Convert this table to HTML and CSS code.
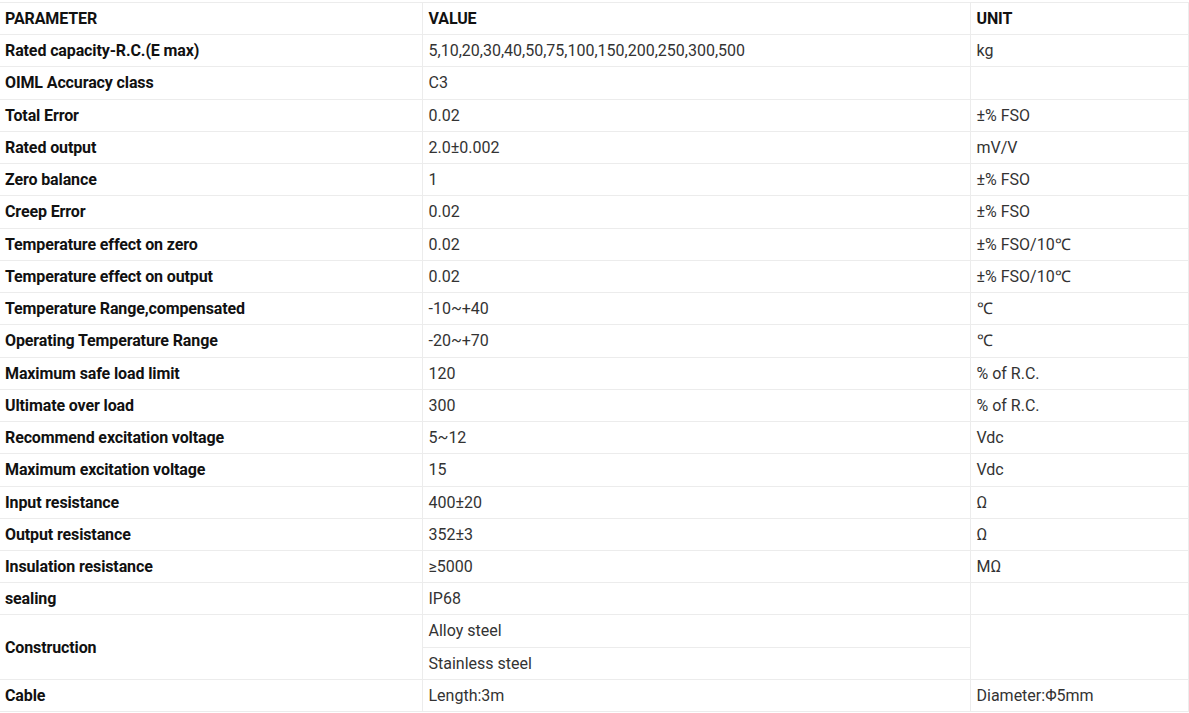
FILE: index.html
```html
<!DOCTYPE html>
<html>
<head>
<meta charset="utf-8">
<link rel="stylesheet" href="styles.css">
</head>
<body>
<table class="spec">
<colgroup><col class="c1"><col class="c2"><col class="c3"></colgroup>
<tr class="head"><td class="p">PARAMETER</td><td>VALUE</td><td>UNIT</td></tr>
<tr><td class="p">Rated capacity-R.C.(E max)</td><td>5,10,20,30,40,50,75,100,150,200,250,300,500</td><td>kg</td></tr>
<tr><td class="p">OIML Accuracy class</td><td>C3</td><td></td></tr>
<tr><td class="p">Total Error</td><td>0.02</td><td>±% FSO</td></tr>
<tr><td class="p">Rated output</td><td>2.0±0.002</td><td>mV/V</td></tr>
<tr><td class="p">Zero balance</td><td>1</td><td>±% FSO</td></tr>
<tr><td class="p">Creep Error</td><td>0.02</td><td>±% FSO</td></tr>
<tr><td class="p">Temperature effect on zero</td><td>0.02</td><td>±% FSO/10℃</td></tr>
<tr><td class="p">Temperature effect on output</td><td>0.02</td><td>±% FSO/10℃</td></tr>
<tr><td class="p">Temperature Range,compensated</td><td>-10~+40</td><td>℃</td></tr>
<tr><td class="p">Operating Temperature Range</td><td>-20~+70</td><td>℃</td></tr>
<tr><td class="p">Maximum safe load limit</td><td>120</td><td>% of R.C.</td></tr>
<tr><td class="p">Ultimate over load</td><td>300</td><td>% of R.C.</td></tr>
<tr><td class="p">Recommend excitation voltage</td><td>5~12</td><td>Vdc</td></tr>
<tr><td class="p">Maximum excitation voltage</td><td>15</td><td>Vdc</td></tr>
<tr><td class="p">Input resistance</td><td>400±20</td><td>Ω</td></tr>
<tr><td class="p">Output resistance</td><td>352±3</td><td>Ω</td></tr>
<tr><td class="p">Insulation resistance</td><td>≥5000</td><td>MΩ</td></tr>
<tr><td class="p">sealing</td><td>IP68</td><td></td></tr>
<tr><td class="p" rowspan="2">Construction</td><td>Alloy steel</td><td rowspan="2"></td></tr>
<tr><td>Stainless steel</td></tr>
<tr><td class="p">Cable</td><td>Length:3m</td><td>Diameter:Φ5mm</td></tr>
</table>
</body>
</html>
```
FILE: styles.css
```css
html, body {
  margin: 0;
  padding: 0;
  background: #fff;
}
body {
  padding-top: 2px;
}
.spec {
  border-collapse: collapse;
  table-layout: fixed;
  width: 1188px;
  font-family: Roboto, "Liberation Sans", sans-serif;
  font-size: 16px;
  color: #333;
}
.c1 { width: 422px; }
.c2 { width: 548px; }
.c3 { width: 218px; }
.spec td {
  border: 1px solid #ececec;
  padding: 5px 6px 5px 6px;
  line-height: 21.23px;
  vertical-align: middle;
  white-space: nowrap;
}
.spec td.p {
  border-left: none;
  padding-left: 5px;
}
.spec .head td,
.spec td.p {
  font-weight: bold;
  color: #111;
  letter-spacing: -0.12px;
}
```
